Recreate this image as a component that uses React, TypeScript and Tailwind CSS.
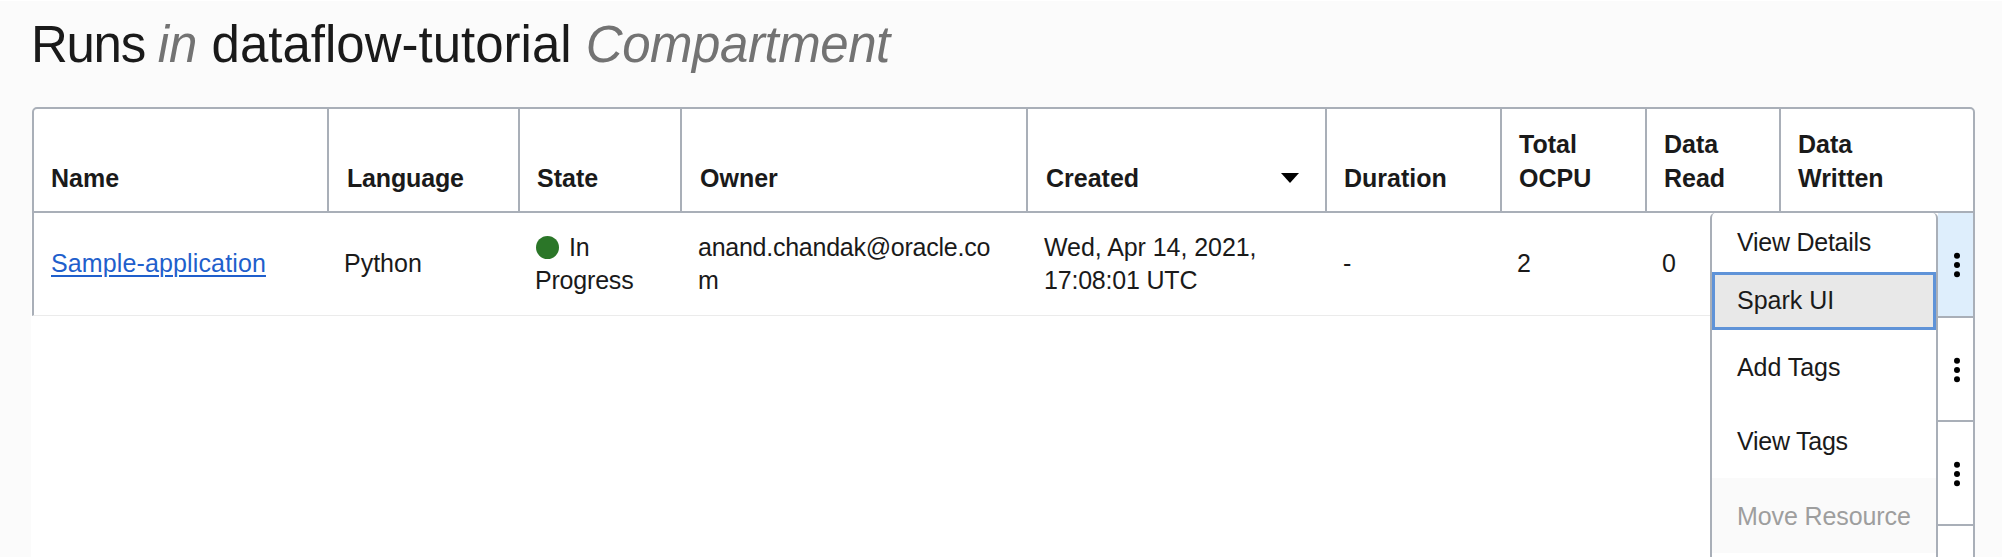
import type { ReactNode } from "react";

const columns: { label: string; width: string; sorted?: boolean }[] = [
  { label: "Name", width: "w-[293px] pl-[17px]" },
  { label: "Language", width: "w-[191px] pl-[18px] border-l-2 tracking-[-0.15px]" },
  { label: "State", width: "w-[162px] pl-[17px] border-l-2" },
  { label: "Owner", width: "w-[346px] pl-[18px] border-l-2" },
  { label: "Created", width: "w-[299px] pl-[18px] border-l-2", sorted: true },
  { label: "Duration", width: "w-[175px] pl-[17px] border-l-2" },
  { label: "Total\nOCPU", width: "w-[145px] pl-[17px] border-l-2" },
  { label: "Data\nRead", width: "w-[134px] pl-[17px] border-l-2" },
  { label: "Data\nWritten", width: "w-[194px] pl-[17px] border-l-2" },
];

function Kebab() {
  return (
    <svg width="8" height="26" viewBox="0 0 8 26" className="mt-px ml-[2px] block">
      <circle cx="4" cy="3.7" r="3" />
      <circle cx="4" cy="13" r="3" />
      <circle cx="4" cy="22.3" r="3" />
    </svg>
  );
}

function Cell({ width, children }: { width: string; children: ReactNode }) {
  return <div className={`flex shrink-0 items-center ${width}`}>{children}</div>;
}

export default function App() {
  return (
    <div className="h-[558px] w-[2002px] overflow-hidden border-y border-white bg-[#fbfbfb] font-['Liberation_Sans',Arial,sans-serif] text-[25px] leading-[33.5px] text-[#1a1a1a]">
      <h1 className="flex h-[106px] pt-[14px] pl-[31px] text-[51px] leading-[60px] font-normal whitespace-pre">
        <span className="tracking-[-1.3px]">Runs </span>
        <i className="text-[#737373]">in </i>
        <span>dataflow-tutorial </span>
        <i className="tracking-[-0.45px] text-[#737373]">Compartment</i>
      </h1>
      <div className="ml-[31px] flex w-[1944px] flex-col">
        <div className="ml-px flex h-[106px] w-[1943px] overflow-hidden rounded-t-[5px] border-2 border-[#a9afb8] bg-white font-bold">
          {columns.map((c) => (
            <div key={c.label} className={`flex shrink-0 items-end justify-between border-[#a9afb8] pb-[16px] ${c.width}`}>
              <span className="whitespace-pre">{c.label}</span>
              {c.sorted && (
                <svg width="18" height="10" viewBox="0 0 18 10" className="mr-[26px] mb-[12px]">
                  <path d="M0 0H18L9 10Z" />
                </svg>
              )}
            </div>
          ))}
        </div>
        <div className="flex h-[345px] bg-white">
          <div className="ml-px flex h-[103px] w-[1678px] shrink-0 border-b border-l-2 border-b-[#ebebeb] border-l-[#a9afb8]">
            <Cell width="w-[293px] pl-[17px]">
              <a className="tracking-[0.13px] text-[#1f5fcc] underline decoration-2 underline-offset-[3px]">Sample-application</a>
            </Cell>
            <Cell width="w-[191px] pl-[17px]">Python</Cell>
            <Cell width="w-[162px] pl-[17px]">
              <div className="tracking-[-0.2px]">
                <div className="flex items-center gap-[10px]">
                  <span className="ml-px size-[23px] rounded-full bg-[#2b7628]" />
                  In
                </div>
                <div>Progress</div>
              </div>
            </Cell>
            <Cell width="w-[346px] pl-[18px]">
              <div className="tracking-[-0.25px]">
                anand.chandak@oracle.co
                <br />m
              </div>
            </Cell>
            <Cell width="w-[299px] pl-[18px]">
              <div>
                <div className="tracking-[-0.06px]">Wed, Apr 14, 2021,</div>
                <div className="tracking-[-0.2px]">17:08:01 UTC</div>
              </div>
            </Cell>
            <Cell width="w-[175px] pl-[18px]">-</Cell>
            <Cell width="w-[145px] pl-[17px]">2</Cell>
            <Cell width="w-[50px] pl-[17px]">0</Cell>
          </div>
          <div className="w-[228px] shrink-0 rounded-t-[5px] border-x-2 border-[#a9afb8]">
            <div className="flex h-[59px] items-center pl-[25px] tracking-[-0.25px]">View Details</div>
            <div className="flex h-[58px] items-center border-[3px] border-[#5f93d8] bg-[#e8e8e8] pb-px pl-[22px]">Spark UI</div>
            <div className="flex h-[74px] items-center pt-[2px] pl-[25px] tracking-[-0.05px]">Add Tags</div>
            <div className="flex h-[74px] items-center pt-[2px] pl-[25px] tracking-[-0.25px]">View Tags</div>
            <div className="flex h-[75px] items-center bg-[#fafafa] pt-[2px] pl-[25px] tracking-[-0.1px] text-[#9e9e9e]">Move Resource</div>
          </div>
          <div className="w-[37px] shrink-0 border-r-2 border-[#a9afb8]">
            <div className="flex h-[105px] items-center justify-center border-b-2 border-[#a9afb8] bg-[#deeefc]"><Kebab /></div>
            <div className="flex h-[104px] items-center justify-center border-b-2 border-[#a9afb8]"><Kebab /></div>
            <div className="flex h-[104px] items-center justify-center border-b-2 border-[#a9afb8]"><Kebab /></div>
          </div>
        </div>
      </div>
    </div>
  );
}
